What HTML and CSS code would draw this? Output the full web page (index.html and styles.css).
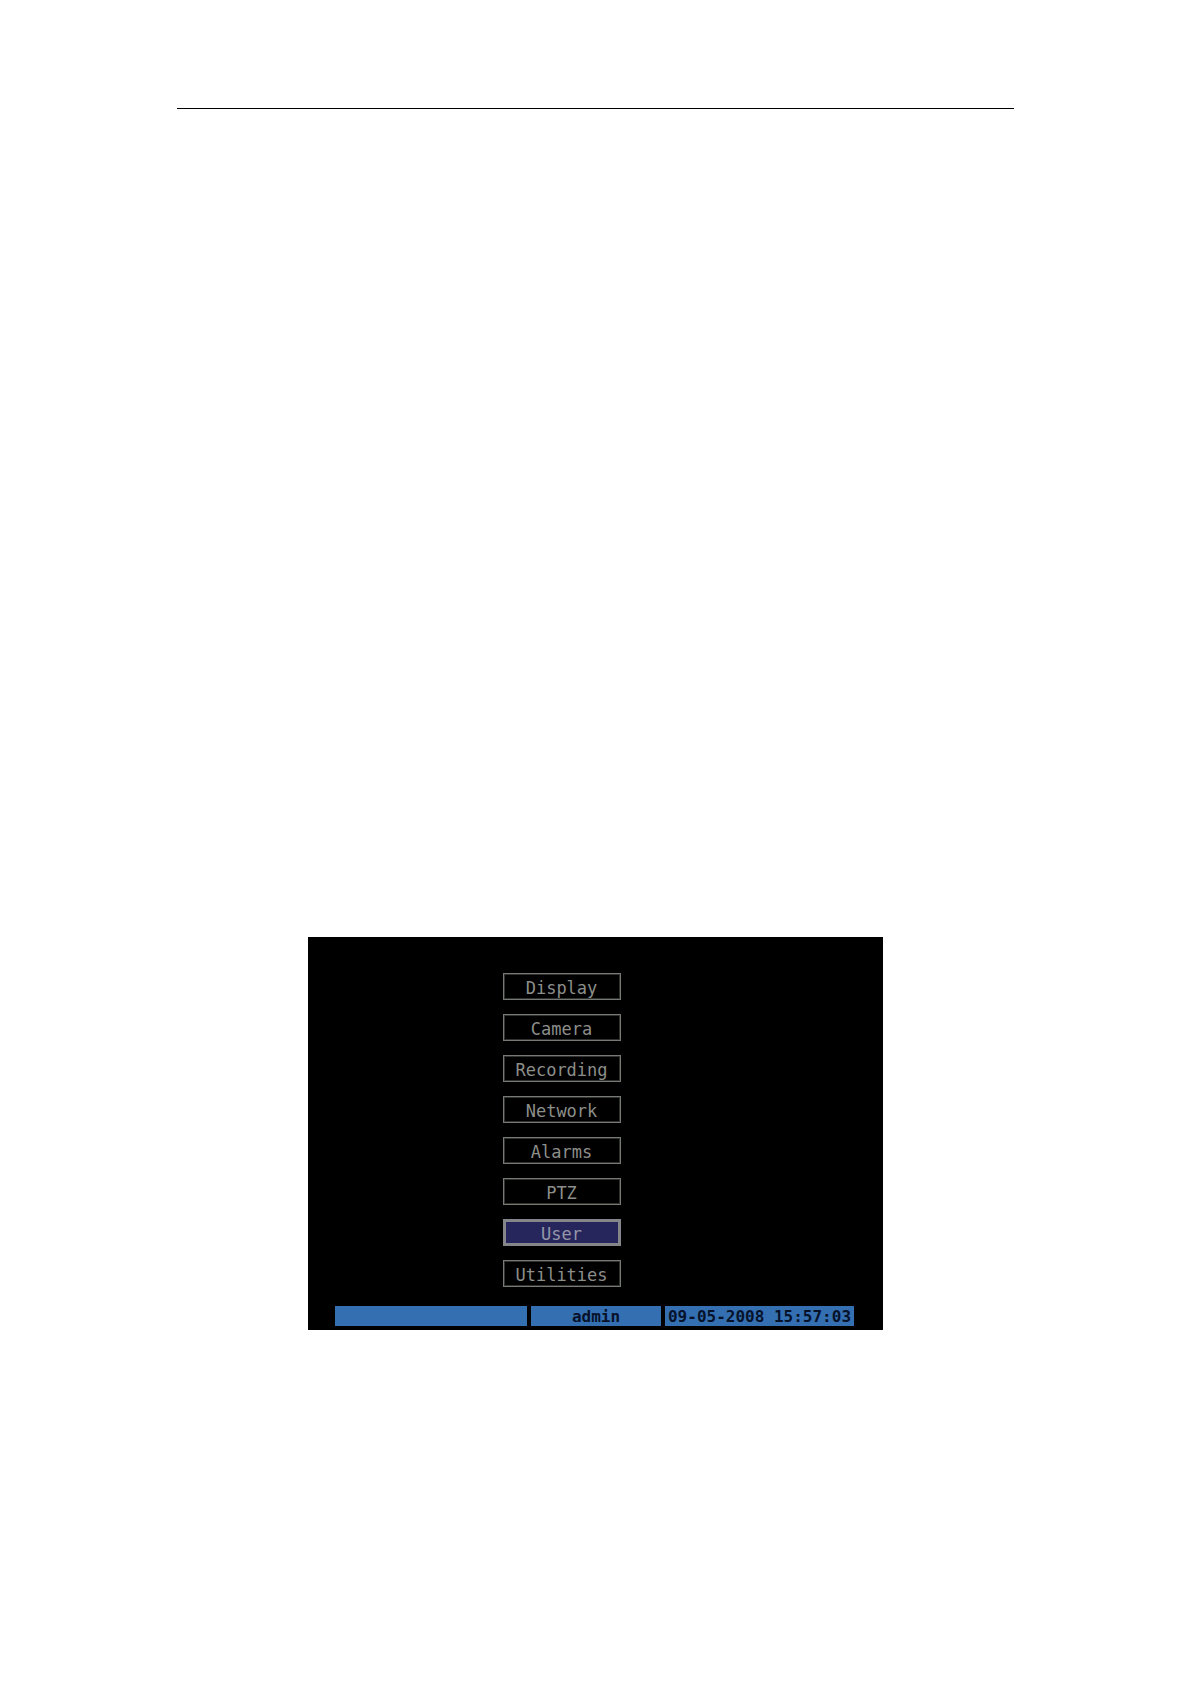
FILE: index.html
```html
<!DOCTYPE html>
<html lang="en">

<head>
    <meta charset="UTF-8">
    <meta name="viewport" content="width=device-width, initial-scale=1.0">
    <title>Menu</title>
    <link rel="stylesheet" href="styles.css">
</head>

<body>

    <div class="page">
        <hr class="rule">

        <main class="screen">
            <nav class="menu">
                <button class="menu-btn" type="button">Display</button>
                <button class="menu-btn" type="button">Camera</button>
                <button class="menu-btn" type="button">Recording</button>
                <button class="menu-btn" type="button">Network</button>
                <button class="menu-btn" type="button">Alarms</button>
                <button class="menu-btn" type="button">PTZ</button>
                <button class="menu-btn selected" type="button">User</button>
                <button class="menu-btn" type="button">Utilities</button>
            </nav>

            <div class="status">
                <div class="status-cell"></div>
                <div class="status-cell">admin</div>
                <div class="status-cell">09-05-2008 15:57:03</div>
            </div>
        </main>
    </div>

</body>

</html>
```

FILE: styles.css
```css
* {
    box-sizing: border-box;
}

body {
    margin: 0;
    background-color: #fff;
    font-family: "DejaVu Sans Mono", monospace;
    font-size: 16px;
}

.page {
    max-width: 837px;
    margin: 0 auto;
    padding: 108px 0;
}

.rule {
    height: 1px;
    margin: 0;
    border: none;
    background-color: #000;
}

.screen {
    max-width: 575px;
    margin: 828px auto 0;
    padding: 36px 29px 4px 27px;
    background-color: #000;
}

.menu {
    display: flex;
    flex-direction: column;
    align-items: center;
    gap: 14px;
    padding-right: 66px;
}

.menu-btn {
    width: 118px;
    height: 27px;
    padding: 2px 0 0;
    border: 1px solid #777975;
    outline: 1px solid #30322f;
    outline-offset: -2px;
    background-color: #000;
    color: #8c8e8a;
    font-family: inherit;
    font-size: 17px;
    line-height: 20px;
    text-align: center;
    cursor: pointer;
}

.menu-btn.selected {
    border: 3px solid #85868a;
    outline: none;
    background-color: #26265c;
    color: #9596a8;
}

.status {
    display: grid;
    grid-template-columns: 192fr 130fr 189fr;
    gap: 4px;
    margin-top: 19px;
}

.status-cell {
    height: 20px;
    background-color: #346fb2;
    color: #06122a;
    font-weight: bold;
    line-height: 22px;
    text-align: center;
    white-space: nowrap;
}
```
